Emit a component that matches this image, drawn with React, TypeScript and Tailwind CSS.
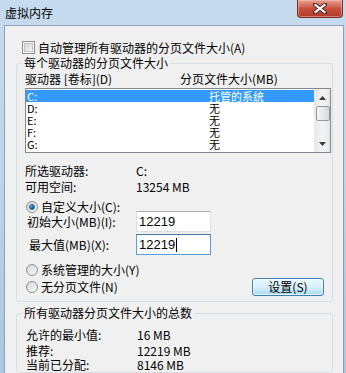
import React from "react";

const font = { fontFamily: '"Noto Sans CJK SC", "Noto Sans", sans-serif' };

function Radio({ checked }: { checked?: boolean }) {
  return (
    <span className="flex h-[12px] w-[12px] items-center justify-center rounded-full border border-[#8e8f8f] bg-gradient-to-br from-[#d5d5d5] to-[#fbfbfb]">
      {checked && (
        <span className="h-[6px] w-[6px] rounded-full border border-[#1d5a8f] bg-gradient-to-br from-[#9fd4f6] via-[#2b7cc4] to-[#0e4a86]" />
      )}
    </span>
  );
}

function Input({ value, focused }: { value: string; focused?: boolean }) {
  return (
    <div
      className={`flex h-[21px] w-[75px] items-center border bg-white pl-[2px] text-[13px] leading-none ${
        focused ? "border-[#569de5] border-t-[#3d7bad]" : "border-[#dbdfe6] border-t-[#abadb3]"
      }`}
      style={{ fontFamily: '"Liberation Sans", sans-serif' }}
    >
      {value}
      {focused && <span className="ml-[1px] h-[14px] w-[1px] bg-black" />}
    </div>
  );
}

const drives = [
  { d: "C:", v: "托管的系统", sel: true },
  { d: "D:", v: "无" },
  { d: "E:", v: "无" },
  { d: "F:", v: "无" },
  { d: "G:", v: "无" },
];

export default function App() {
  return (
    <div
      className="flex h-[373px] w-[346px] flex-col overflow-hidden bg-gradient-to-b from-[#c7dbee] via-[#bcd3ea] to-[#aac6e2] text-[12px] leading-[12px] text-black"
      style={font}
    >
      {/* title bar */}
      <div className="flex h-[25px] shrink-0 items-start justify-between">
        <div className="pl-[5px] pt-[7px] text-[12px] leading-[12px]">虚拟内存</div>
        <div className="mr-[3px] flex h-[18px] w-[46px] items-center justify-center rounded-b-[4px] border border-t-0 border-[#7a2a22] bg-gradient-to-b from-[#e6a394] via-[#c9503f] to-[#b2372a] shadow-[inset_0_0_0_1px_rgba(255,200,190,0.5)]">
          <svg width="14" height="11" viewBox="0 0 14 11">
            <path d="M2 1.5 L12 9.5 M12 1.5 L2 9.5" stroke="#4a2620" strokeWidth="4" strokeLinecap="square" />
            <path d="M2.5 2 L11.5 9 M11.5 2 L2.5 9" stroke="#ffffff" strokeWidth="2.2" strokeLinecap="square" />
          </svg>
        </div>
      </div>

      {/* client area */}
      <div className="ml-[4px] flex w-[340px] flex-1 flex-col border border-b-0 border-[#8da2b8] bg-[#f0f0f0]">
        {/* checkbox */}
        <div className="ml-[17px] mt-[15px] flex h-[13px] items-center gap-[3px]">
          <span className="flex h-[13px] w-[13px] items-center justify-center border border-[#8f8f8f] bg-[#f4f4f4]">
            <span className="h-[9px] w-[9px] border border-[#c4c4c4] bg-gradient-to-br from-[#d2d2d2] to-[#f8f8f8]" />
          </span>
          <span>自动管理所有驱动器的分页文件大小(A)</span>
        </div>

        {/* group 1 */}
        <fieldset className="ml-[11px] mt-[3px] w-[317px] rounded-[3px] border border-[#d5dfe5] pb-[5px]">
          <legend className="ml-[5px] px-[2px] leading-[12px]">每个驱动器的分页文件大小</legend>
          <div className="ml-[8px] mt-[4px] flex h-[12px] items-center">
            <span className="w-[155px]">驱动器 [卷标](D)</span>
            <span>分页文件大小(MB)</span>
          </div>

          {/* listbox */}
          <div className="ml-[8px] mt-[3px] flex h-[65px] w-[306px] border border-[#828790] bg-white">
            <div className="w-[288px] pt-[1px]">
              {drives.map((r) => (
                <div
                  key={r.d}
                  className={`flex h-[12px] items-center pl-[1px] text-[11px] leading-[11px] ${
                    r.sel ? "bg-[#3399ff] text-white" : ""
                  }`}
                >
                  <span className="w-[182px]">{r.d}</span>
                  <span>{r.v}</span>
                </div>
              ))}
            </div>
            <div className="flex w-[16px] flex-col items-center border-l border-[#eaeaea] bg-gradient-to-r from-[#e8e8e8] via-[#f4f4f4] to-[#e8e8e8]">
              <div className="flex h-[17px] items-center justify-center">
                <svg width="7" height="4" viewBox="0 0 7 4">
                  <path d="M0 4 L3.5 0 L7 4 Z" fill="#3a3a3a" />
                </svg>
              </div>
              <div className="h-[15px] w-[14px] rounded-[2px] border border-[#979797] bg-gradient-to-r from-[#f6f6f6] via-[#e9e9e9] to-[#d8d8d8]" />
              <div className="flex-1" />
              <div className="flex h-[17px] items-center justify-center">
                <svg width="7" height="4" viewBox="0 0 7 4">
                  <path d="M0 0 L7 0 L3.5 4 Z" fill="#3a3a3a" />
                </svg>
              </div>
            </div>
          </div>

          {/* selected info */}
          <div className="ml-[8px] mt-[10px] flex h-[16px] items-center">
            <span className="w-[111px]">所选驱动器:</span>
            <span>C:</span>
          </div>
          <div className="ml-[8px] flex h-[16px] items-center">
            <span className="w-[111px]">可用空间:</span>
            <span>13254 MB</span>
          </div>

          <div className="ml-[9px] mt-[6px] flex h-[12px] items-center gap-[3px]">
            <Radio checked />
            <span>自定义大小(C):</span>
          </div>
          <div className="-mt-[2px] flex h-[21px] items-center">
            <span className="ml-[10px] w-[109px]">初始大小(MB)(I):</span>
            <Input value="12219" />
          </div>
          <div className="mt-[2px] flex h-[21px] items-center">
            <span className="ml-[12px] w-[107px]">最大值(MB)(X):</span>
            <Input value="12219" focused />
          </div>

          <div className="ml-[9px] mt-[9px] flex h-[12px] items-center gap-[3px]">
            <Radio />
            <span>系统管理的大小(Y)</span>
          </div>
          <div className="mt-[2px] flex h-[18px] items-center justify-between">
            <div className="ml-[9px] flex items-center gap-[3px]">
              <Radio />
              <span>无分页文件(N)</span>
            </div>
            <button className="mr-[8px] flex h-[18px] w-[72px] items-center justify-center rounded-[3px] border border-[#3c7fb1] bg-gradient-to-b from-[#eaf6fd] via-[#d9f0fc] to-[#a7d9f5] shadow-[inset_0_0_0_1px_rgba(255,255,255,0.7)]">
              设置(S)
            </button>
          </div>
        </fieldset>

        {/* group 2 */}
        <fieldset className="ml-[11px] mt-[5px] w-[317px] flex-1 rounded-[3px] border border-[#d5dfe5]">
          <legend className="ml-[5px] px-[2px] leading-[12px]">所有驱动器分页文件大小的总数</legend>
          <div className="ml-[9px] mt-[8px] flex h-[16px] items-center">
            <span className="w-[111px]">允许的最小值:</span>
            <span>16 MB</span>
          </div>
          <div className="ml-[9px] flex h-[16px] items-center">
            <span className="w-[111px]">推荐:</span>
            <span>12219 MB</span>
          </div>
          <div className="ml-[9px] flex h-[12px] items-center">
            <span className="w-[111px]">当前已分配:</span>
            <span>8146 MB</span>
          </div>
        </fieldset>
      </div>
    </div>
  );
}
